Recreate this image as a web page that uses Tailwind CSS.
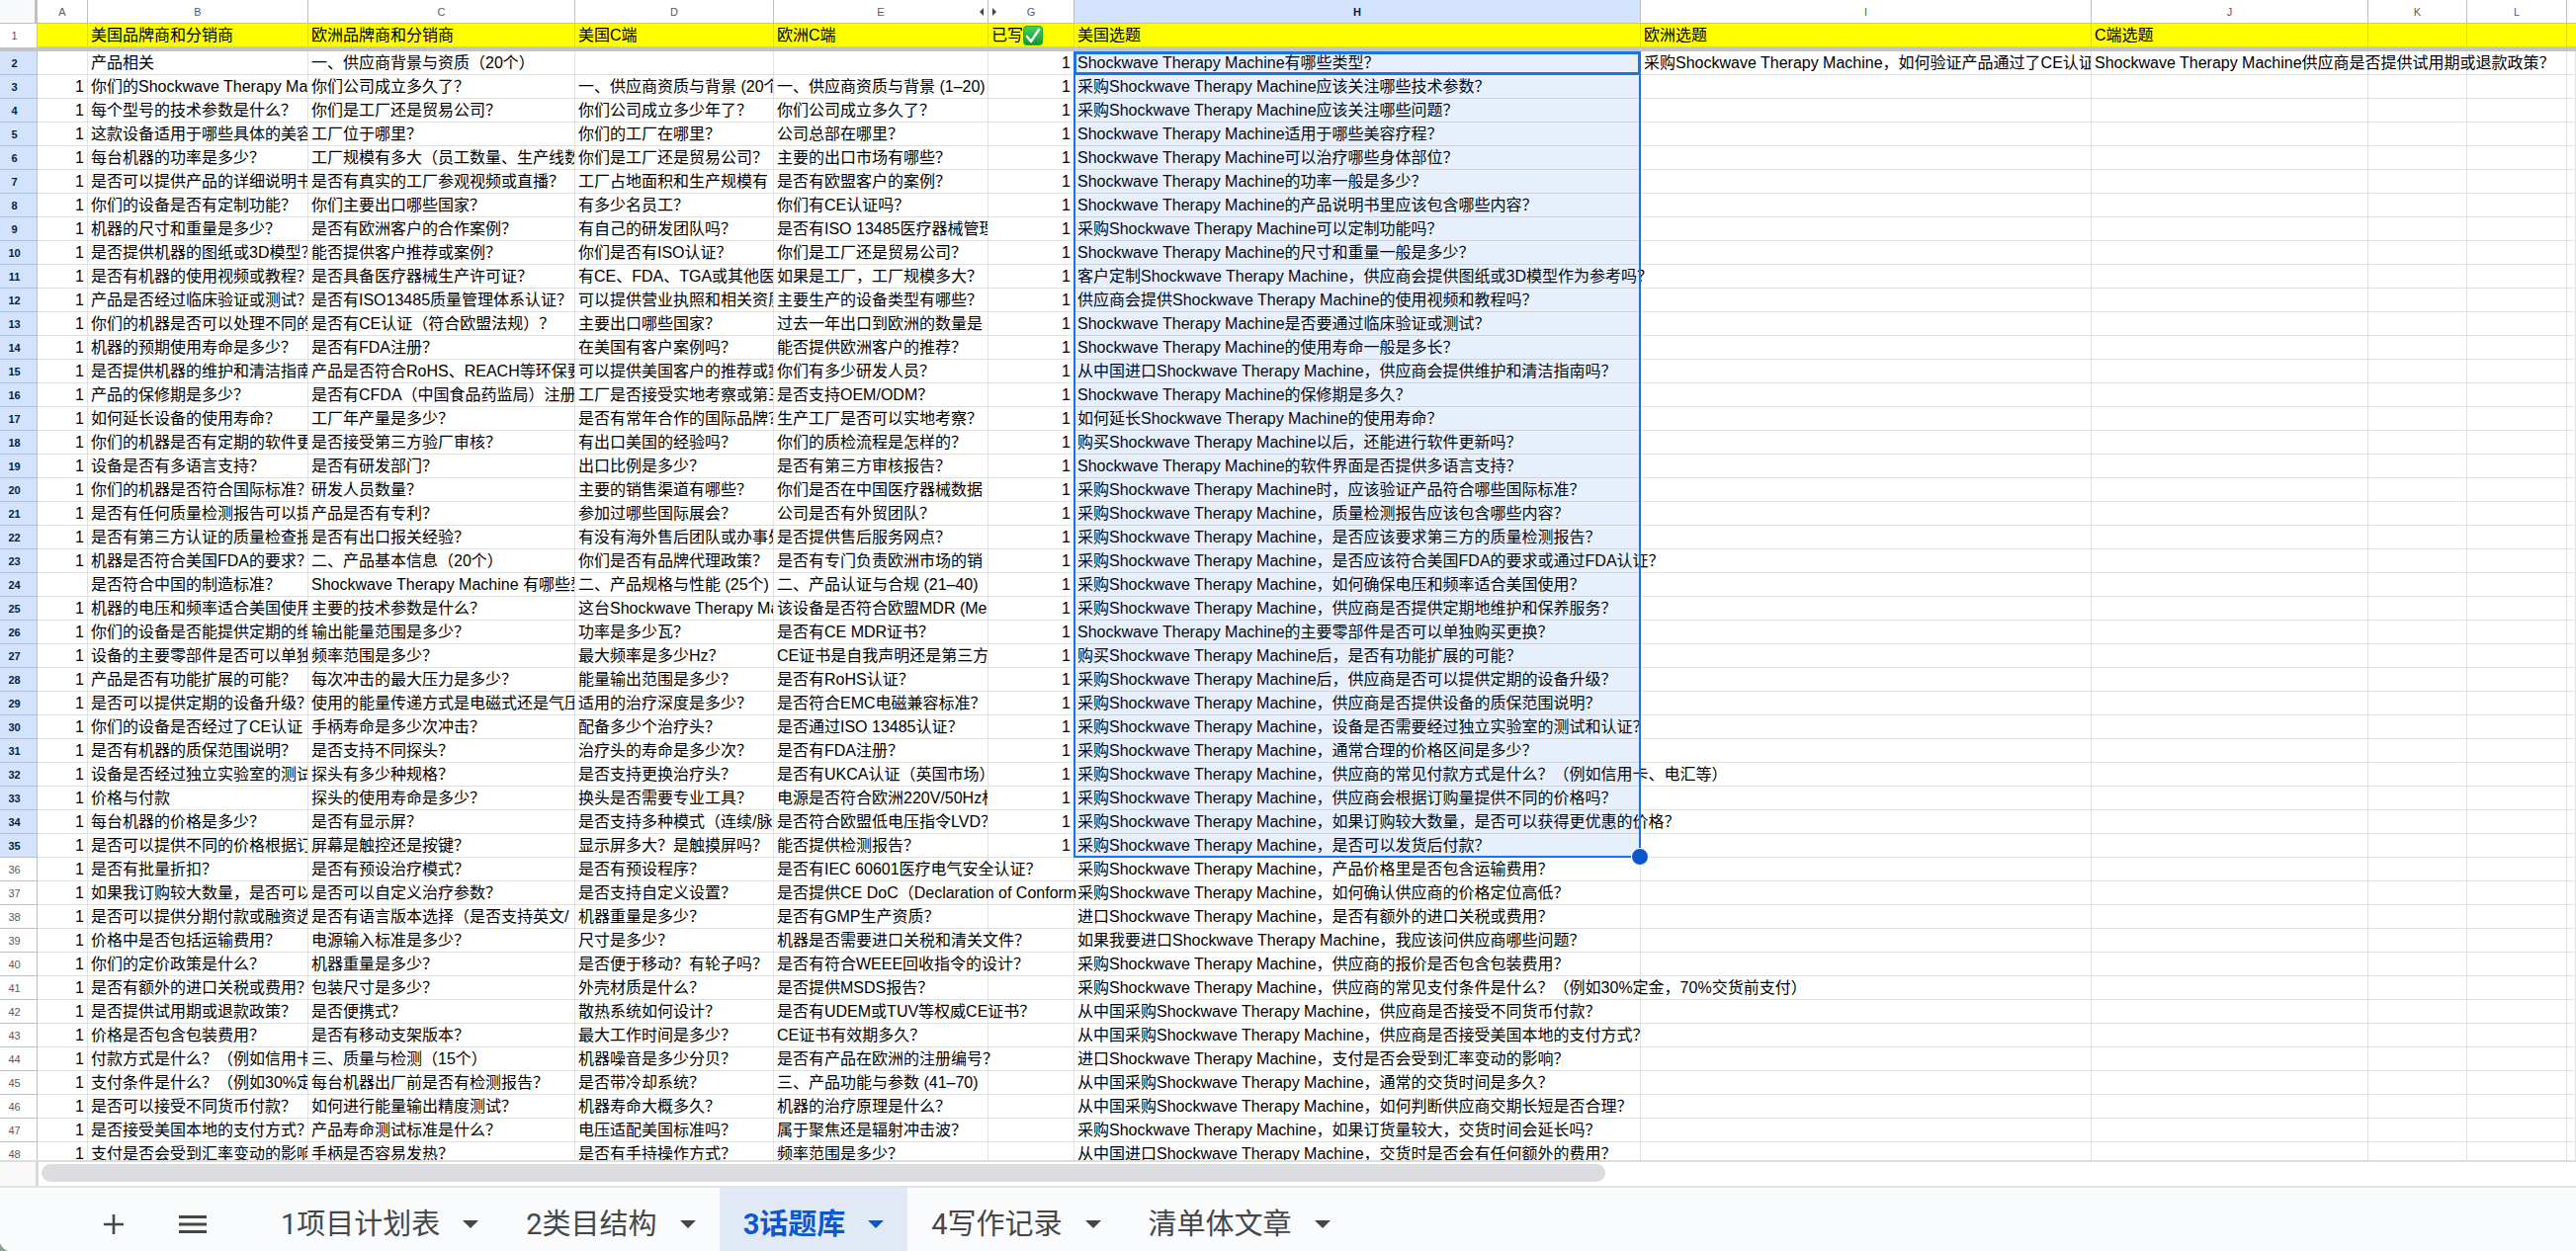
<!DOCTYPE html>
<html lang="zh-CN">

<head>
  <meta charset="UTF-8" />
  <meta name="viewport" content="width=device-width, initial-scale=1.0" />
  <title>3话题库</title>
  <script src="https://cdn.jsdelivr.net/npm/@tailwindcss/browser@4"></script>
</head>

<body class="bg-white text-black font-['Liberation_Sans','Noto_Sans_CJK_SC',sans-serif]">

  <div class="h-screen flex flex-col overflow-hidden">

    <!-- 表格 -->
    <main class="flex-1 min-h-0 overflow-hidden">
      <table class="w-full table-fixed border-separate border-spacing-0 text-base leading-5 whitespace-nowrap">
        <colgroup>
          <col class="w-[38px]" />
          <col class="w-[51px]" />
          <col class="w-[223px]" />
          <col class="w-[270px]" />
          <col class="w-[201px]" />
          <col class="w-[217px]" />
          <col class="w-[87px]" />
          <col class="w-[573px]" />
          <col class="w-[456px]" />
          <col class="w-[280px]" />
          <col class="w-[100px]" />
          <col class="w-[101px]" />
          <col />
        </colgroup>
        <thead>
          <tr class="h-6 text-[11px] text-[#575b5f]">
            <td class="bg-[#f8f9fa] border-r-3 border-b border-[#c0c0c0]"></td>
            <th class="font-normal border-r border-b border-[#c0c0c0]">A</th>
            <th class="font-normal border-r border-b border-[#c0c0c0]">B</th>
            <th class="font-normal border-r border-b border-[#c0c0c0]">C</th>
            <th class="font-normal border-r border-b border-[#c0c0c0]">D</th>
            <th class="font-normal border-r border-b border-[#c0c0c0] relative">E
              <svg class="absolute right-1 top-2 w-1 h-2" viewBox="0 0 4 8"><path d="M4 0v8L0 4z" fill="#444746" /></svg>
            </th>
            <th class="font-normal border-r border-b border-[#c0c0c0] relative">G
              <svg class="absolute left-1 top-2 w-1 h-2" viewBox="0 0 4 8"><path d="M0 0v8l4-4z" fill="#444746" /></svg>
            </th>
            <th class="font-bold border-r border-b border-[#c0c0c0] bg-[#d3e3fd] text-[#041e49]">H</th>
            <th class="font-normal border-r border-b border-[#c0c0c0]">I</th>
            <th class="font-normal border-r border-b border-[#c0c0c0]">J</th>
            <th class="font-normal border-r border-b border-[#c0c0c0]">K</th>
            <th class="font-normal border-r border-b border-[#c0c0c0]">L</th>
            <td class="border-b border-[#c0c0c0]"></td>
          </tr>
          <tr class="h-6 bg-[#ffff00] text-left">
            <th class="bg-white font-normal text-[11px] text-center pr-2 text-[#575b5f] border-r border-[#c0c0c0]">1</th>
            <td class="border-r border-b border-[#e1e100]"></td>
            <th class="font-normal pl-[3px] border-r border-b border-[#e1e100]">美国品牌商和分销商</th>
            <th class="font-normal pl-[3px] border-r border-b border-[#e1e100]">欧洲品牌商和分销商</th>
            <th class="font-normal pl-[3px] border-r border-b border-[#e1e100]">美国C端</th>
            <th class="font-normal pl-[3px] border-r border-b border-[#e1e100]">欧洲C端</th>
            <th class="font-normal pl-[3px] border-r border-b border-[#e1e100]">
              <div class="flex items-center">已写
                <svg class="w-5 h-5" viewBox="0 0 20 20" role="img" aria-label="✅">
                  <defs>
                    <linearGradient id="tick" x1="0" y1="0" x2="0" y2="1">
                      <stop offset="0" stop-color="#4ccf5c" />
                      <stop offset="1" stop-color="#069a30" />
                    </linearGradient>
                  </defs>
                  <rect x=".5" y=".5" width="19" height="19" rx="3" fill="url(#tick)" stroke="#0b9c38" stroke-width=".8" />
                  <path d="M4 11l4 5 8-12" fill="none" stroke="#fff" stroke-width="2.4" stroke-linecap="round" stroke-linejoin="round" />
                </svg>
              </div>
            </th>
            <th class="font-normal pl-[3px] border-r border-b border-[#e1e100]">美国选题</th>
            <th class="font-normal pl-[3px] border-r border-b border-[#e1e100]">欧洲选题</th>
            <th class="font-normal pl-[3px] border-r border-b border-[#e1e100]">C端选题</th>
            <td class="border-r border-b border-[#e1e100]"></td>
            <td class="border-r border-b border-[#e1e100]"></td>
            <td class="border-b border-[#e1e100]"></td>
          </tr>
          <!-- 冻结线 -->
          <tr class="h-1 bg-[#c4c4c4]">
            <td colspan="13" class="h-1 p-0"></td>
          </tr>
        </thead>
        <tbody id="rows"></tbody>
      </table>
    </main>

    <!-- 横向滚动条 -->
    <div class="shrink-0 h-[26px] flex border-t-2 border-[#dddddd] bg-white">
      <div class="w-[39px] h-6 bg-[#f8f8f8] border-r-3 border-[#d9d9d9]"></div>
      <div class="flex-1 pl-[3px] pt-[2px]">
        <div class="w-[61.7%] h-[18px] rounded-full bg-[#dadce0]"></div>
      </div>
    </div>

    <!-- 工作表标签 -->
    <nav class="relative shrink-0 h-[66px] border-t-2 border-[#e1e3e1] bg-[#f9fbfd] flex text-[29px] leading-9 text-[#444746] font-['Roboto','Noto_Sans_CJK_SC',sans-serif]">
      <div class="w-[260px] pl-[105px] pt-[10px] flex items-center gap-14 h-full">
        <button type="button" aria-label="添加工作表">
          <svg class="w-5 h-5" viewBox="0 0 20 20"><path d="M10 0v20M0 10h20" stroke="#444746" stroke-width="2.6" /></svg>
        </button>
        <button type="button" aria-label="所有工作表">
          <svg class="w-7 h-5" viewBox="0 0 28 20"><path d="M0 2.5h28M0 10h28M0 17.5h28" stroke="#444746" stroke-width="2.8" /></svg>
        </button>
      </div>
      <button type="button" class="px-6 pt-[10px] flex items-center gap-[23px]">1项目计划表
        <svg class="w-4 h-2" viewBox="0 0 16 8"><path d="M0 0h16L8 8z" fill="currentColor" /></svg>
      </button>
      <button type="button" class="px-6 pt-[10px] flex items-center gap-[23px]">2类目结构
        <svg class="w-4 h-2" viewBox="0 0 16 8"><path d="M0 0h16L8 8z" fill="currentColor" /></svg>
      </button>
      <button type="button" class="px-6 pt-[10px] flex items-center gap-[23px] bg-[#e1e9f7] text-[#0b57d0] font-bold">3话题库
        <svg class="w-4 h-2" viewBox="0 0 16 8"><path d="M0 0h16L8 8z" fill="currentColor" /></svg>
      </button>
      <button type="button" class="px-6 pt-[10px] flex items-center gap-[23px]">4写作记录
        <svg class="w-4 h-2" viewBox="0 0 16 8"><path d="M0 0h16L8 8z" fill="currentColor" /></svg>
      </button>
      <button type="button" class="px-6 pt-[10px] flex items-center gap-[23px]">清单体文章
        <svg class="w-4 h-2" viewBox="0 0 16 8"><path d="M0 0h16L8 8z" fill="currentColor" /></svg>
      </button>
      <svg class="absolute left-0 bottom-0 w-2 h-2" viewBox="0 0 8 8"><path d="M0 0q2 5 8 8H0z" fill="#8fa596" /></svg>
    </nav>
  </div>

  <script>
    const SWT = 'Shockwave Therapy Machine';

    // B, C, D, E, H, I, J
    const data = [
      ['产品相关', '一、供应商背景与资质（20个）', '', '', `${SWT}有哪些类型？`, `采购${SWT}，如何验证产品通过了CE认证`, `${SWT}供应商是否提供试用期或退款政策？`],
      ['你们的Shockwave Therapy Ma', '你们公司成立多久了？', '一、供应商资质与背景 (20个', '一、供应商资质与背景 (1–20)', `采购${SWT}应该关注哪些技术参数？`],
      ['每个型号的技术参数是什么？', '你们是工厂还是贸易公司？', '你们公司成立多少年了？', '你们公司成立多久了？', `采购${SWT}应该关注哪些问题？`],
      ['这款设备适用于哪些具体的美容', '工厂位于哪里？', '你们的工厂在哪里？', '公司总部在哪里？', `${SWT}适用于哪些美容疗程？`],
      ['每台机器的功率是多少？', '工厂规模有多大（员工数量、生产线数', '你们是工厂还是贸易公司？', '主要的出口市场有哪些？', `${SWT}可以治疗哪些身体部位？`],
      ['是否可以提供产品的详细说明书', '是否有真实的工厂参观视频或直播？', '工厂占地面积和生产规模有', '是否有欧盟客户的案例？', `${SWT}的功率一般是多少？`],
      ['你们的设备是否有定制功能？', '你们主要出口哪些国家？', '有多少名员工？', '你们有CE认证吗？', `${SWT}的产品说明书里应该包含哪些内容？`],
      ['机器的尺寸和重量是多少？', '是否有欧洲客户的合作案例？', '有自己的研发团队吗？', '是否有ISO 13485医疗器械管理', `采购${SWT}可以定制功能吗？`],
      ['是否提供机器的图纸或3D模型？', '能否提供客户推荐或案例？', '你们是否有ISO认证？', '你们是工厂还是贸易公司？', `${SWT}的尺寸和重量一般是多少？`],
      ['是否有机器的使用视频或教程？', '是否具备医疗器械生产许可证？', '有CE、FDA、TGA或其他医', '如果是工厂，工厂规模多大？', `客户定制${SWT}，供应商会提供图纸或3D模型作为参考吗？`],
      ['产品是否经过临床验证或测试？', '是否有ISO13485质量管理体系认证？', '可以提供营业执照和相关资质', '主要生产的设备类型有哪些？', `供应商会提供${SWT}的使用视频和教程吗？`],
      ['你们的机器是否可以处理不同的', '是否有CE认证（符合欧盟法规）？', '主要出口哪些国家？', '过去一年出口到欧洲的数量是', `${SWT}是否要通过临床验证或测试？`],
      ['机器的预期使用寿命是多少？', '是否有FDA注册？', '在美国有客户案例吗？', '能否提供欧洲客户的推荐？', `${SWT}的使用寿命一般是多长？`],
      ['是否提供机器的维护和清洁指南', '产品是否符合RoHS、REACH等环保要', '可以提供美国客户的推荐或案', '你们有多少研发人员？', `从中国进口${SWT}，供应商会提供维护和清洁指南吗？`],
      ['产品的保修期是多少？', '是否有CFDA（中国食品药监局）注册', '工厂是否接受实地考察或第三', '是否支持OEM/ODM？', `${SWT}的保修期是多久？`],
      ['如何延长设备的使用寿命？', '工厂年产量是多少？', '是否有常年合作的国际品牌？', '生产工厂是否可以实地考察？', `如何延长${SWT}的使用寿命？`],
      ['你们的机器是否有定期的软件更', '是否接受第三方验厂审核？', '有出口美国的经验吗？', '你们的质检流程是怎样的？', `购买${SWT}以后，还能进行软件更新吗？`],
      ['设备是否有多语言支持？', '是否有研发部门？', '出口比例是多少？', '是否有第三方审核报告？', `${SWT}的软件界面是否提供多语言支持？`],
      ['你们的机器是否符合国际标准？', '研发人员数量？', '主要的销售渠道有哪些？', '你们是否在中国医疗器械数据', `采购${SWT}时，应该验证产品符合哪些国际标准？`],
      ['是否有任何质量检测报告可以提', '产品是否有专利？', '参加过哪些国际展会？', '公司是否有外贸团队？', `采购${SWT}，质量检测报告应该包含哪些内容？`],
      ['是否有第三方认证的质量检查报', '是否有出口报关经验？', '有没有海外售后团队或办事处', '是否提供售后服务网点？', `采购${SWT}，是否应该要求第三方的质量检测报告？`],
      ['机器是否符合美国FDA的要求？', '二、产品基本信息（20个）', '你们是否有品牌代理政策？', '是否有专门负责欧洲市场的销', `采购${SWT}，是否应该符合美国FDA的要求或通过FDA认证？`],
      ['是否符合中国的制造标准？', `${SWT} 有哪些型`, '二、产品规格与性能 (25个)', '二、产品认证与合规 (21–40)', `采购${SWT}，如何确保电压和频率适合美国使用？`],
      ['机器的电压和频率适合美国使用', '主要的技术参数是什么？', '这台Shockwave Therapy Ma', '该设备是否符合欧盟MDR (Me', `采购${SWT}，供应商是否提供定期地维护和保养服务？`],
      ['你们的设备是否能提供定期的维', '输出能量范围是多少？', '功率是多少瓦？', '是否有CE MDR证书？', `${SWT}的主要零部件是否可以单独购买更换？`],
      ['设备的主要零部件是否可以单独', '频率范围是多少？', '最大频率是多少Hz？', 'CE证书是自我声明还是第三方', `购买${SWT}后，是否有功能扩展的可能？`],
      ['产品是否有功能扩展的可能？', '每次冲击的最大压力是多少？', '能量输出范围是多少？', '是否有RoHS认证？', `采购${SWT}后，供应商是否可以提供定期的设备升级？`],
      ['是否可以提供定期的设备升级？', '使用的能量传递方式是电磁式还是气压', '适用的治疗深度是多少？', '是否符合EMC电磁兼容标准？', `采购${SWT}，供应商是否提供设备的质保范围说明？`],
      ['你们的设备是否经过了CE认证', '手柄寿命是多少次冲击？', '配备多少个治疗头？', '是否通过ISO 13485认证？', `采购${SWT}，设备是否需要经过独立实验室的测试和认证？`],
      ['是否有机器的质保范围说明？', '是否支持不同探头？', '治疗头的寿命是多少次？', '是否有FDA注册？', `采购${SWT}，通常合理的价格区间是多少？`],
      ['设备是否经过独立实验室的测试', '探头有多少种规格？', '是否支持更换治疗头？', '是否有UKCA认证（英国市场）', `采购${SWT}，供应商的常见付款方式是什么？（例如信用卡、电汇等）`],
      ['价格与付款', '探头的使用寿命是多少？', '换头是否需要专业工具？', '电源是否符合欧洲220V/50Hz标', `采购${SWT}，供应商会根据订购量提供不同的价格吗？`],
      ['每台机器的价格是多少？', '是否有显示屏？', '是否支持多种模式（连续/脉', '是否符合欧盟低电压指令LVD？', `采购${SWT}，如果订购较大数量，是否可以获得更优惠的价格？`],
      ['是否可以提供不同的价格根据订', '屏幕是触控还是按键？', '显示屏多大？是触摸屏吗？', '能否提供检测报告？', `采购${SWT}，是否可以发货后付款？`],
      ['是否有批量折扣？', '是否有预设治疗模式？', '是否有预设程序？', '是否有IEC 60601医疗电气安全认证？', `采购${SWT}，产品价格里是否包含运输费用？`],
      ['如果我订购较大数量，是否可以', '是否可以自定义治疗参数？', '是否支持自定义设置？', '是否提供CE DoC（Declaration of Conform', `采购${SWT}，如何确认供应商的价格定位高低？`],
      ['是否可以提供分期付款或融资选', '是否有语言版本选择（是否支持英文/', '机器重量是多少？', '是否有GMP生产资质？', `进口${SWT}，是否有额外的进口关税或费用？`],
      ['价格中是否包括运输费用？', '电源输入标准是多少？', '尺寸是多少？', '机器是否需要进口关税和清关文件？', `如果我要进口${SWT}，我应该问供应商哪些问题？`],
      ['你们的定价政策是什么？', '机器重量是多少？', '是否便于移动？有轮子吗？', '是否有符合WEEE回收指令的设计？', `采购${SWT}，供应商的报价是否包含包装费用？`],
      ['是否有额外的进口关税或费用？', '包装尺寸是多少？', '外壳材质是什么？', '是否提供MSDS报告？', `采购${SWT}，供应商的常见支付条件是什么？（例如30%定金，70%交货前支付）`],
      ['是否提供试用期或退款政策？', '是否便携式？', '散热系统如何设计？', '是否有UDEM或TUV等权威CE证书？', `从中国采购${SWT}，供应商是否接受不同货币付款？`],
      ['价格是否包含包装费用？', '是否有移动支架版本？', '最大工作时间是多少？', 'CE证书有效期多久？', `从中国采购${SWT}，供应商是否接受美国本地的支付方式？`],
      ['付款方式是什么？（例如信用卡', '三、质量与检测（15个）', '机器噪音是多少分贝？', '是否有产品在欧洲的注册编号？', `进口${SWT}，支付是否会受到汇率变动的影响？`],
      ['支付条件是什么？（例如30%定', '每台机器出厂前是否有检测报告？', '是否带冷却系统？', '三、产品功能与参数 (41–70)', `从中国采购${SWT}，通常的交货时间是多久？`],
      ['是否可以接受不同货币付款？', '如何进行能量输出精度测试？', '机器寿命大概多久？', '机器的治疗原理是什么？', `从中国采购${SWT}，如何判断供应商交期长短是否合理？`],
      ['是否接受美国本地的支付方式？', '产品寿命测试标准是什么？', '电压适配美国标准吗？', '属于聚焦还是辐射冲击波？', `采购${SWT}，如果订货量较大，交货时间会延长吗？`],
      ['支付是否会受到汇率变动的影响', '手柄是否容易发热？', '是否有手持操作方式？', '频率范围是多少？', `从中国进口${SWT}，交货时是否会有任何额外的费用？`]
    ];

    const SEL_FIRST = 2;
    const SEL_LAST = 35;
    const rowHeight = 24;

    const selection = `
      <div class="absolute -left-px -right-px top-0 bg-[#1660e8]/10 border-2 border-[#1a73e8] pointer-events-none" style="height:${(SEL_LAST - SEL_FIRST + 1) * rowHeight}px">
        <div class="absolute -left-[2px] -right-[2px] -top-[2px] h-6 border-3 border-[#1a73e8]"></div>
        <div class="absolute -right-[10px] -bottom-[10px] w-[18px] h-[18px] rounded-full bg-[#0b57d0] border border-white"></div>
      </div>`;

    const tbody = document.getElementById('rows');
    let html = '';
    data.forEach((row, i) => {
      const n = i + 2;
      const selected = n >= SEL_FIRST && n <= SEL_LAST;
      const a = n === 2 || n === 24 ? '' : '1';
      const g = selected ? '1' : '';
      const cells = [a, row[0], row[1], row[2], row[3], g, row[4], row[5] || '', row[6] || '', '', '', ''];

      html += `<tr class="h-6"><th class="${selected ? 'bg-[#d3e3fd] font-bold text-[#041e49]' : 'bg-white font-normal text-[#575b5f]'} text-[11px] text-center pr-2 border-r border-b border-[#c0c0c0]">${n}</th>`;
      cells.forEach((text, c) => {
        const right = c === 0 || c === 5;
        // 右侧单元格有内容时才裁剪
        const clip = cells[c + 1] ? 'overflow-hidden' : '';
        const over = n === SEL_FIRST && c === 6 ? selection : '';
        html += `<td class="${right ? 'text-right pr-[3px]' : 'pl-[3px]'} ${over ? 'relative' : clip} border-r border-b border-[#e1e1e1]"><span>${text}</span>${over}</td>`;
      });
      html += '</tr>';
    });
    tbody.innerHTML = html;

    // 文字溢出到空单元格时，隐藏中间的竖线
    tbody.querySelectorAll('td').forEach(td => {
      const end = td.firstChild.getBoundingClientRect().right;
      let cell = td;
      while (cell && end > cell.getBoundingClientRect().right && cell.nextElementSibling && !cell.nextElementSibling.textContent.trim()) {
        cell.classList.add('border-r-transparent');
        cell = cell.nextElementSibling;
      }
    });
  </script>

</body>

</html>
